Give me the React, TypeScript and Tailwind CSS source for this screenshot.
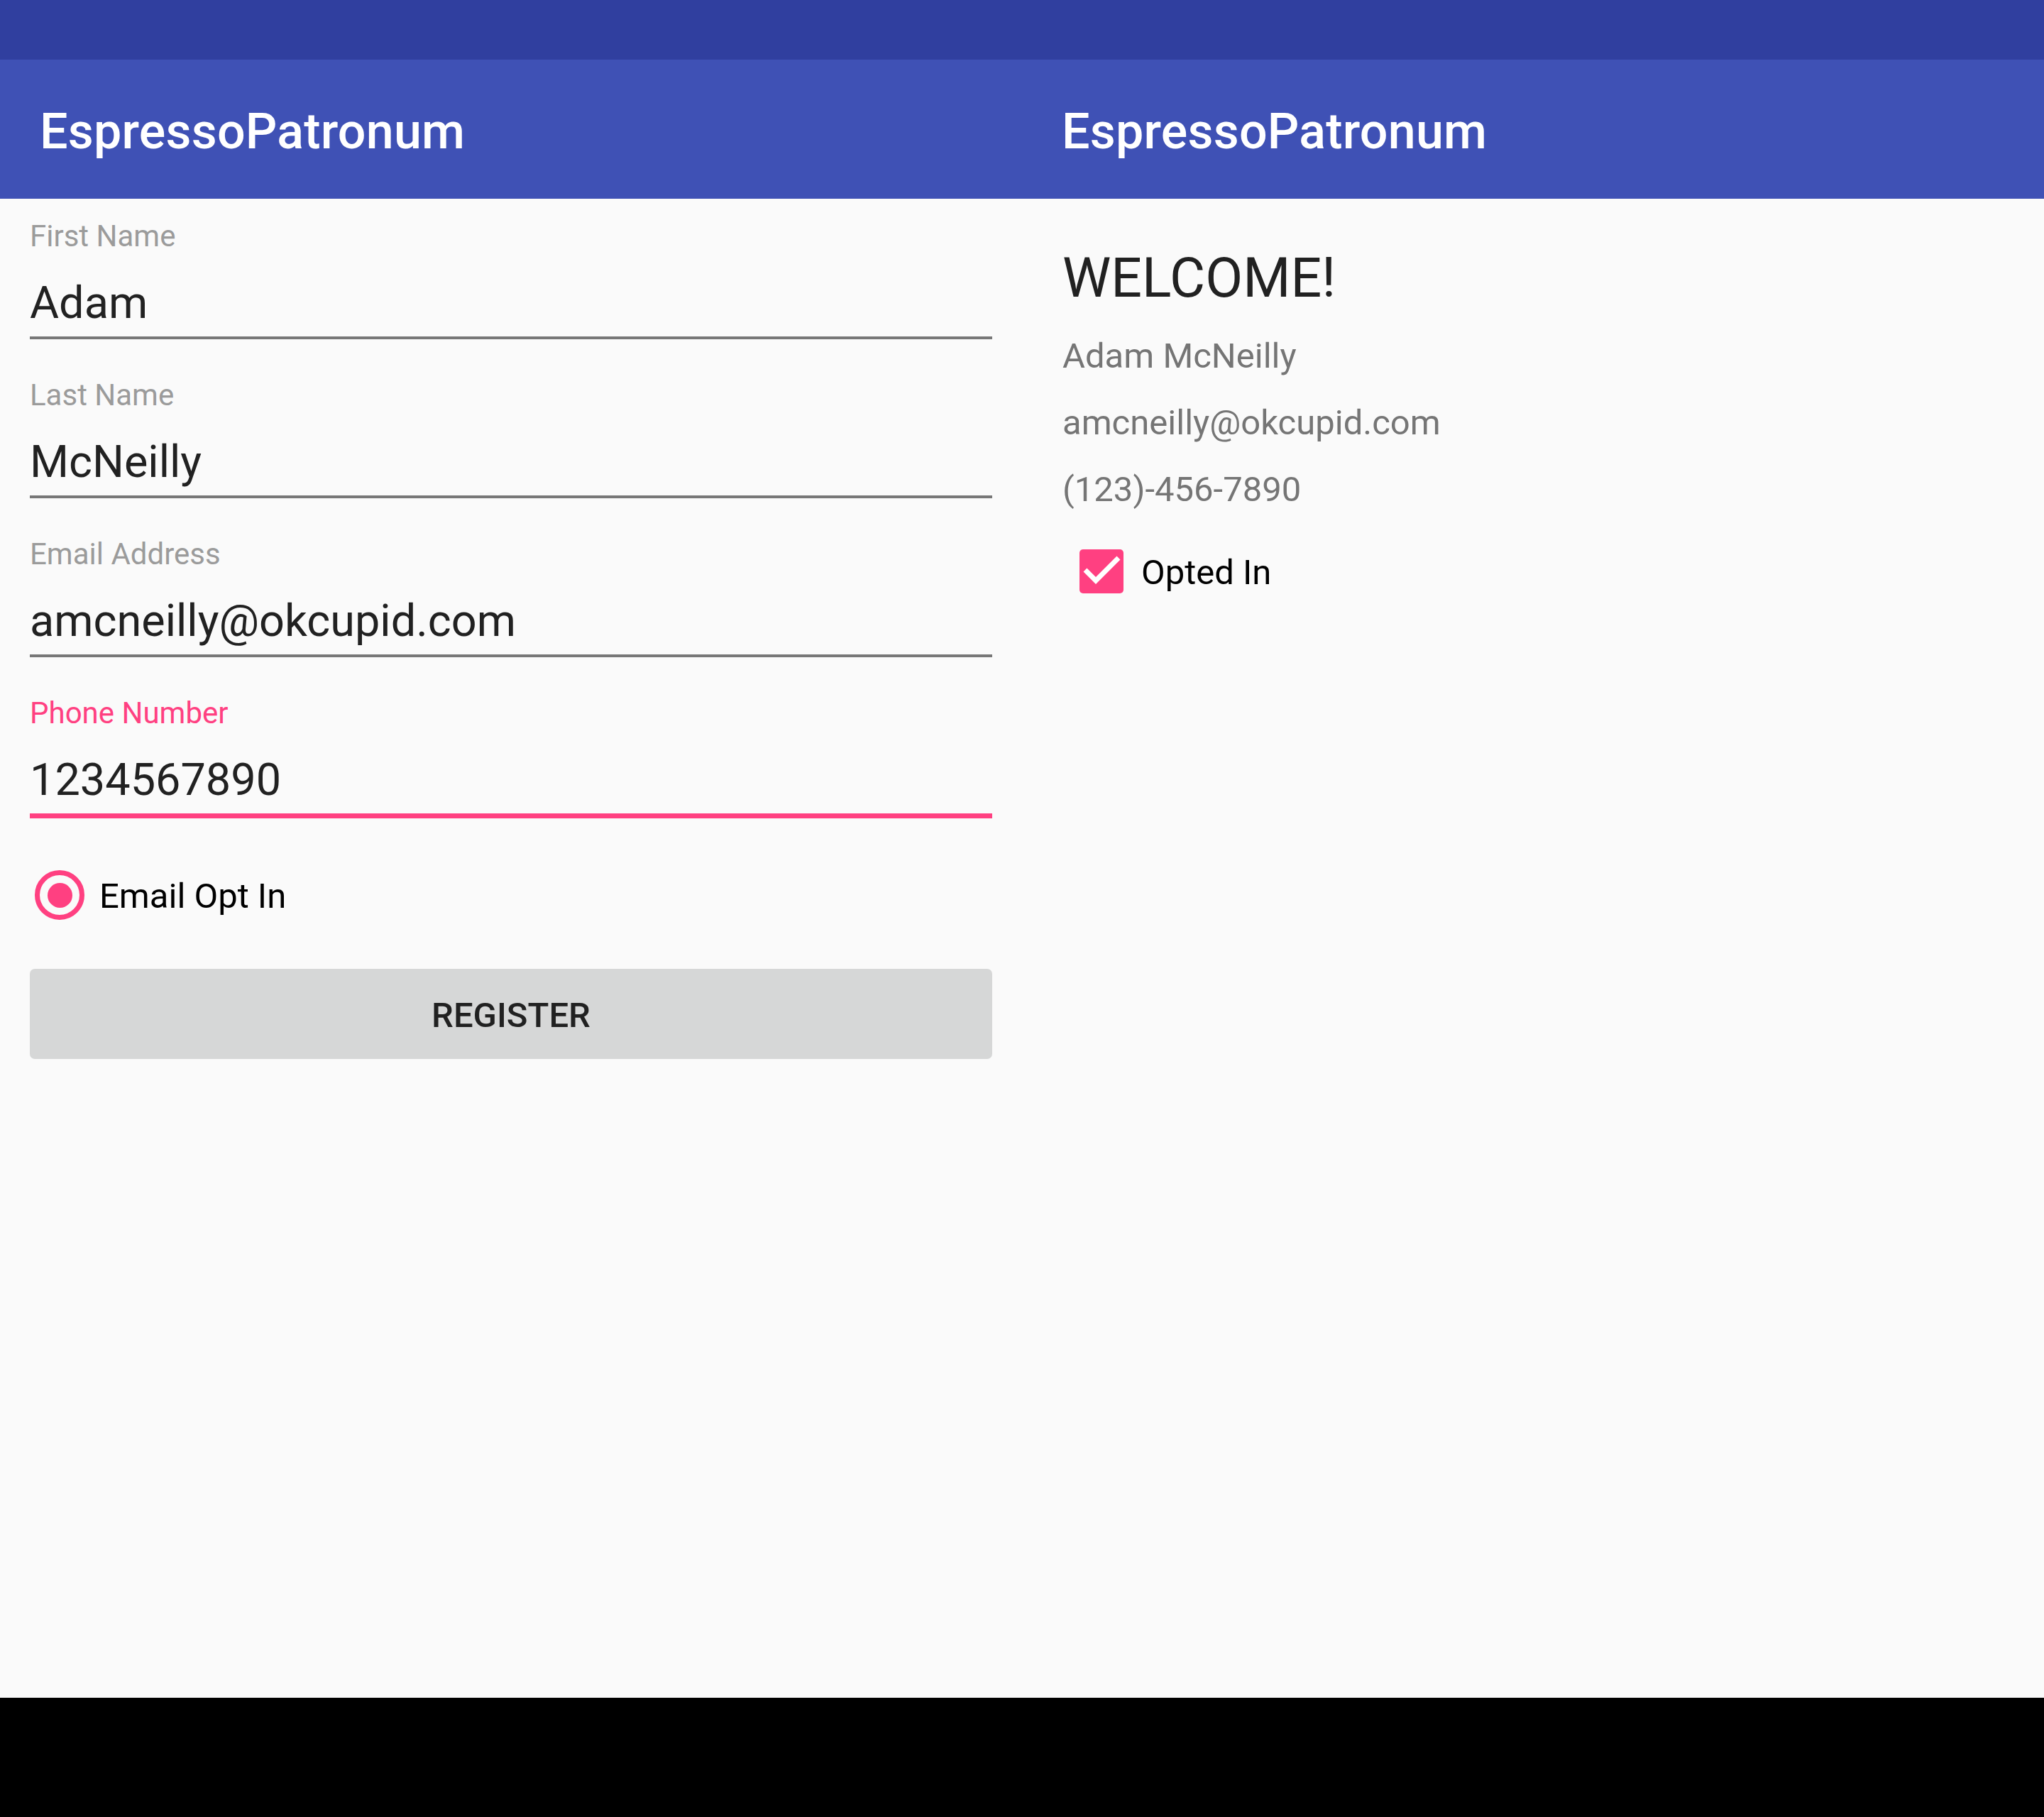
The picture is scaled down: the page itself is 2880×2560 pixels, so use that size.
import React from "react";

const font = { fontFamily: "Roboto, 'Noto Sans', sans-serif" };

interface FieldProps {
  label: string;
  value: string;
  focused?: boolean;
}

function Field({ label, value, focused }: FieldProps) {
  return (
    <div className="flex flex-col">
      <div
        className={
          focused
            ? "text-[42px] leading-[50px] text-[#FF4081]"
            : "text-[42px] leading-[50px] text-[#9b9b9b]"
        }
      >
        {label}
      </div>
      <div className="mt-[32px] text-[63px] leading-[74px] text-[#212121]">
        {value}
      </div>
      {focused ? (
        <div className="mt-[10px] h-[7px] bg-[#FF4081]" />
      ) : (
        <div className="mt-[10px] h-[4px] bg-[#777777]" />
      )}
    </div>
  );
}

function Toolbar() {
  return (
    <div className="flex h-[196px] items-center bg-[#3F51B5] pl-[56px] pt-[6px]">
      <span className="text-[70px] font-medium leading-[82px] tracking-[0.2px] text-white">
        EspressoPatronum
      </span>
    </div>
  );
}

function RegisterPane() {
  return (
    <div className="flex flex-col">
      <Toolbar />
      <div className="flex flex-col px-[42px] pt-[28px]">
        <div className="flex flex-col gap-[54px]">
          <Field label="First Name" value="Adam" />
          <Field label="Last Name" value="McNeilly" />
          <Field label="Email Address" value="amcneilly@okcupid.com" />
          <Field label="Phone Number" value="1234567890" focused />
        </div>

        <div className="mt-[73px] flex h-[70px] items-center">
          <div className="ml-[7px] flex h-[70px] w-[70px] items-center justify-center rounded-full border-[7px] border-[#FF4081]">
            <div className="h-[35px] w-[35px] rounded-full bg-[#FF4081]" />
          </div>
          <span className="ml-[21px] pt-[3px] text-[49px] leading-[58px] text-black">
            Email Opt In
          </span>
        </div>

        <button className="mt-[69px] flex h-[127px] items-center justify-center rounded-[7px] bg-[#D6D7D7] pt-[5px]">
          <span className="text-[49px] font-medium leading-[58px] text-[#212121]">
            REGISTER
          </span>
        </button>
      </div>
    </div>
  );
}

function WelcomePane() {
  return (
    <div className="flex flex-col">
      <Toolbar />
      <div className="flex flex-col pl-[57px] pt-[67px]">
        <div className="text-[77px] leading-[90px] text-[#212121]">WELCOME!</div>
        <div className="mt-[36px] text-[49px] leading-[58px] text-[#757575]">
          Adam McNeilly
        </div>
        <div className="mt-[36px] text-[49px] leading-[58px] text-[#757575]">
          amcneilly@okcupid.com
        </div>
        <div className="mt-[36px] text-[49px] leading-[58px] text-[#757575]">
          (123)-456-7890
        </div>
        <div className="mt-[55px] flex h-[62px] items-center">
          <div className="ml-[24px] flex h-[62px] w-[62px] items-center justify-center rounded-[5px] bg-[#FF4081]">
            <svg width="62" height="62" viewBox="0 0 62 62">
              <polyline
                points="8,29 23,44 55,12"
                fill="none"
                stroke="white"
                strokeWidth="7"
              />
            </svg>
          </div>
          <span className="ml-[25px] pt-[3px] text-[49px] leading-[58px] text-black">
            Opted In
          </span>
        </div>
      </div>
    </div>
  );
}

export default function App() {
  return (
    <div className="flex h-[2560px] w-[2880px] flex-col bg-[#FAFAFA]" style={font}>
      <div className="h-[84px] bg-[#303F9F]" />
      <div className="grid flex-1 grid-cols-2">
        <RegisterPane />
        <WelcomePane />
      </div>
      <div className="h-[168px] bg-black" />
    </div>
  );
}
